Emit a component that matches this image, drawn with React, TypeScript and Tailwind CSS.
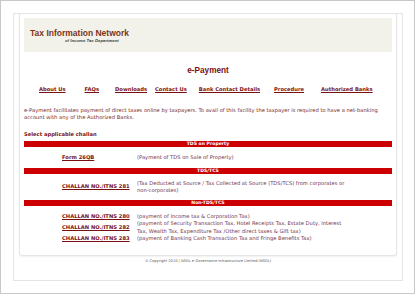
const maroon = "text-[#7a0f12]";

const navItems = [
  { t: "About Us", cls: "ml-0" },
  { t: "FAQs", cls: "ml-[19px]" },
  { t: "Downloads", cls: "ml-[16px]" },
  { t: "Contact Us", cls: "ml-[8px]" },
  { t: "Bank Contact Details", cls: "ml-[12px]" },
  { t: "Procedure", cls: "ml-[14px]" },
  { t: "Authorized Banks", cls: "ml-[17px]" },
];

function Nav() {
  return (
    <div className="flex pl-[15px] text-[5.2px] font-bold leading-none">
      {navItems.map((n) => (
        <a key={n.t} href="#" className={`${maroon} ${n.cls} underline`}>
          {n.t}
        </a>
      ))}
    </div>
  );
}

function Bar({ title }: { title: string }) {
  return (
    <div className="h-[6px] bg-[#cc0000] text-center text-[4.6px] font-bold leading-[6px] text-white">{title}</div>
  );
}

function Row({ code, children }: { code: string; children: React.ReactNode }) {
  return (
    <div className="grid grid-cols-[113px_1fr] items-center">
      <a href="#" className={`pl-[38px] font-bold underline ${maroon}`}>
        {code}
      </a>
      <div className="text-[#74364f]">{children}</div>
    </div>
  );
}

export default function App() {
  return (
    <div className="h-[294px] w-[415px] border border-[#c8c8c8] bg-white pl-[12px] pt-[12px] font-['DejaVu_Sans',sans-serif]">
      <div className="h-[268px] w-[390px] border border-[#e4e4e4] px-[5px]">
        <div className="h-[242px] rounded-b-[3px] border border-t-0 border-[#e6e6e6] px-[4px] pt-[4px] shadow-[0_1px_2px_rgba(0,0,0,0.06)]">
          <div className="flex h-[34px] flex-col justify-center bg-[#f3f2ea] pl-[6px] pt-[2px] font-['Liberation_Sans',sans-serif]">
            <div className="text-[8.5px] font-bold leading-none text-[#7c3519]">Tax Information Network</div>
            <div className="pl-[35px] pt-[1px] text-[4.3px] font-bold italic leading-none text-[#3d3d3d]">of Income Tax Department</div>
          </div>
          <div className="pt-[15px] text-center text-[8.2px] font-bold leading-none text-[#7a0f12] font-['Liberation_Sans',sans-serif]">
            e-Payment
          </div>
          <div className="pt-[12px]">
            <Nav />
          </div>
          <p className="pt-[15px] text-[5.2px] leading-[7px] text-[#7a2a2a]">
            e-Payment facilitates payment of direct taxes online by taxpayers. To avail of this facility the taxpayer is required to have a net-banking account with any of the Authorized Banks.
          </p>
          <div className={`pt-[11px] text-[5.2px] font-bold leading-none ${maroon}`}>Select applicable challan</div>
          <div className="flex flex-col pt-[3px] text-[5.2px] leading-[7.5px]">
            <Bar title="TDS on Property" />
            <div className="py-[7px]">
              <Row code="Form 26QB">(Payment of TDS on Sale of Property)</Row>
            </div>
            <Bar title="TDS/TCS" />
            <div className="py-[5.5px]">
              <Row code="CHALLAN NO./ITNS 281">
                (Tax Deducted at Source / Tax Collected at Source (TDS/TCS) from corporates or
                <br />
                non-corporates)
              </Row>
            </div>
            <Bar title="Non-TDS/TCS" />
            <div className="flex flex-col pt-[6.5px]">
              <Row code="CHALLAN NO./ITNS 280">(payment of Income tax &amp; Corporation Tax)</Row>
              <Row code="CHALLAN NO./ITNS 282">
                (payment of Security Transaction Tax, Hotel Receipts Tax, Estate Duty, Interest
                <br />
                Tax, Wealth Tax, Expenditure Tax /Other direct taxes &amp; Gift tax)
              </Row>
              <Row code="CHALLAN NO./ITNS 283">(payment of Banking Cash Transaction Tax and Fringe Benefits Tax)</Row>
            </div>
          </div>
        </div>
        <div className="pt-[4px] text-center text-[3.6px] leading-none text-[#555]">
          © Copyright 2010 | NSDL e-Governance Infrastructure Limited (NSDL)
        </div>
      </div>
    </div>
  );
}
